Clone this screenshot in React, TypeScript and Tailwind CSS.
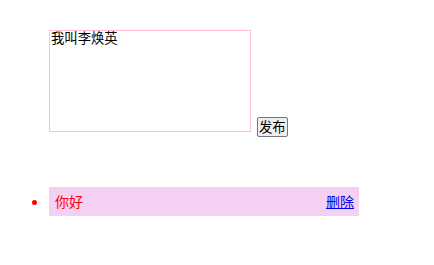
const items = [{ id: 1, text: "你好" }];

export default function App() {
  return (
    <div className="min-h-[265px] bg-white pl-[49px] pt-[30px] font-['Noto_Sans_CJK_SC','Noto_Sans',sans-serif]">
      <div className="flex items-end">
        <textarea
          className="h-[102px] w-[202px] resize-none border border-[#ffc0cb] px-px pt-0 text-[13.33px] leading-[1.1] text-black outline-none"
          defaultValue="我叫李焕英"
        />
        <button className="mb-[-5px] ml-[6px] h-[20px] rounded-[2px] border border-[#767676] bg-[#efefef] px-px text-[13.33px] leading-none text-black">
          发布
        </button>
      </div>

      <ul className="mt-[55px] list-disc text-[14px] text-[#ff0000]">
        {items.map((item) => (
          <li key={item.id} className="w-[310px] bg-[#f4d0f2]">
            <div className="flex h-[29px] items-center justify-between pl-[6px] pr-[5px]">
              <span>{item.text}</span>
              <a href="#" className="text-[#0000ee] underline">
                删除
              </a>
            </div>
          </li>
        ))}
      </ul>
    </div>
  );
}
